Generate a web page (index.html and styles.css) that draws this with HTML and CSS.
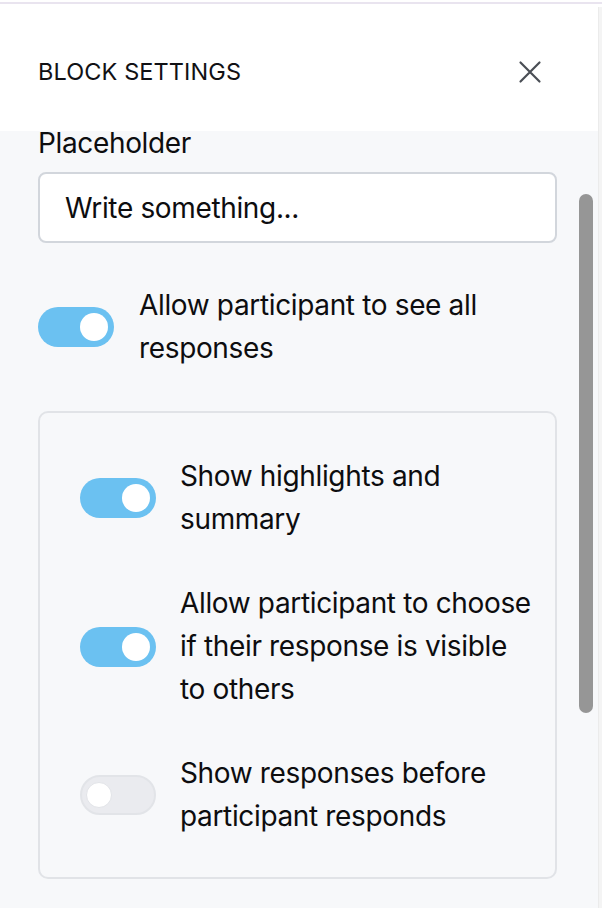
FILE: index.html
```html
<!DOCTYPE html>
<html lang="en">
<head>
<meta charset="utf-8">
<title>Block settings</title>
<link rel="stylesheet" href="styles.css">
</head>
<body>
<div class="frame">
  <div class="topline"></div>
  <div class="window">
    <div class="panel">
      <header class="head">
        <h1 class="title">BLOCK SETTINGS</h1>
        <button class="close" aria-label="Close">
          <svg width="24" height="24" viewBox="0 0 24 24" fill="none" stroke="#4a4e55" stroke-width="2.2" stroke-linecap="round"><path d="M2.5 2.5L21.5 21.5M21.5 2.5L2.5 21.5"/></svg>
        </button>
      </header>
      <div class="body">
        <label class="label">Placeholder</label>
        <div class="input">Write something...</div>

        <div class="row row-main">
          <span class="toggle on"><span class="knob"></span></span>
          <span class="text">Allow participant to see all responses</span>
        </div>

        <div class="group">
          <div class="row">
            <span class="toggle on"><span class="knob"></span></span>
            <span class="text">Show highlights and summary</span>
          </div>
          <div class="row">
            <span class="toggle on"><span class="knob"></span></span>
            <span class="text">Allow participant to choose if their response is visible to others</span>
          </div>
          <div class="row">
            <span class="toggle off"><span class="knob"></span></span>
            <span class="text">Show responses before participant responds</span>
          </div>
        </div>
      </div>
      <div class="scroll-thumb"></div>
    </div>
    <div class="edge"></div>
  </div>
</div>
</body>
</html>
```

FILE: styles.css
```css
* { box-sizing: border-box; }

html, body {
  margin: 0;
  padding: 0;
}

body {
  background: #ffffff;
  font-family: Inter, "Noto Sans", "Liberation Sans", sans-serif;
  color: #0d0d0f;
  width: 602px;
  height: 908px;
  overflow: hidden;
}

.frame {
  display: flex;
  flex-direction: column;
  height: 908px;
  padding-top: 2px;
}

.topline {
  height: 2px;
  background: #e9e4ef;
  flex: none;
}

.window {
  flex: 1;
  display: flex;
}

.panel {
  position: relative;
  flex: 1;
  background: #f7f8fa;
  overflow: hidden;
}

.edge {
  width: 4px;
  margin-top: 3px;
  background: #f4f4f4;
  border-left: 1px solid #ebebeb;
}

.head {
  height: 127px;
  background: #ffffff;
  display: flex;
  align-items: center;
  justify-content: space-between;
  padding: 8px 56px 0 38px;
}

.title {
  margin: 0;
  font-size: 23.5px;
  font-weight: 400;
  letter-spacing: 0.1px;
  color: #111114;
}

.close {
  border: 0;
  background: none;
  padding: 0;
  width: 24px;
  height: 24px;
  display: flex;
}

.body {
  padding: 0 41px 0 38px;
  letter-spacing: -0.35px;
}

.label {
  display: block;
  font-size: 28px;
  line-height: 24px;
  margin-bottom: 17px;
}

.input {
  height: 71px;
  background: #ffffff;
  border: 2px solid #d2d6dc;
  border-radius: 8px;
  display: flex;
  align-items: center;
  padding-left: 25px;
  font-size: 28px;
}

.row {
  display: flex;
  align-items: center;
  gap: 24px;
}

.row-main {
  margin-top: 41px;
  gap: 25px;
}

.text {
  font-size: 28px;
  line-height: 43px;
}

.toggle {
  flex: none;
  width: 76px;
  height: 40px;
  border-radius: 20px;
  display: flex;
  align-items: center;
  padding: 0 6px;
}

.toggle.on {
  background: #6bc1f1;
  justify-content: flex-end;
}

.toggle.off {
  background: #eaebef;
  border: 2px solid #e2e4e8;
  padding: 0 4px;
  justify-content: flex-start;
}

.knob {
  width: 28px;
  height: 28px;
  border-radius: 50%;
  background: #ffffff;
}

.toggle.off .knob {
  width: 26px;
  height: 26px;
  border: 1px solid #e2e4e8;
}

.group {
  margin-top: 41px;
  border: 2px solid #e1e3e7;
  border-radius: 10px;
  padding: 42px 22px 39px 40px;
  display: flex;
  flex-direction: column;
  gap: 41px;
}

.scroll-thumb {
  position: absolute;
  left: 579px;
  top: 190px;
  width: 14px;
  height: 519px;
  border-radius: 7px;
  background: #969696;
}
```
